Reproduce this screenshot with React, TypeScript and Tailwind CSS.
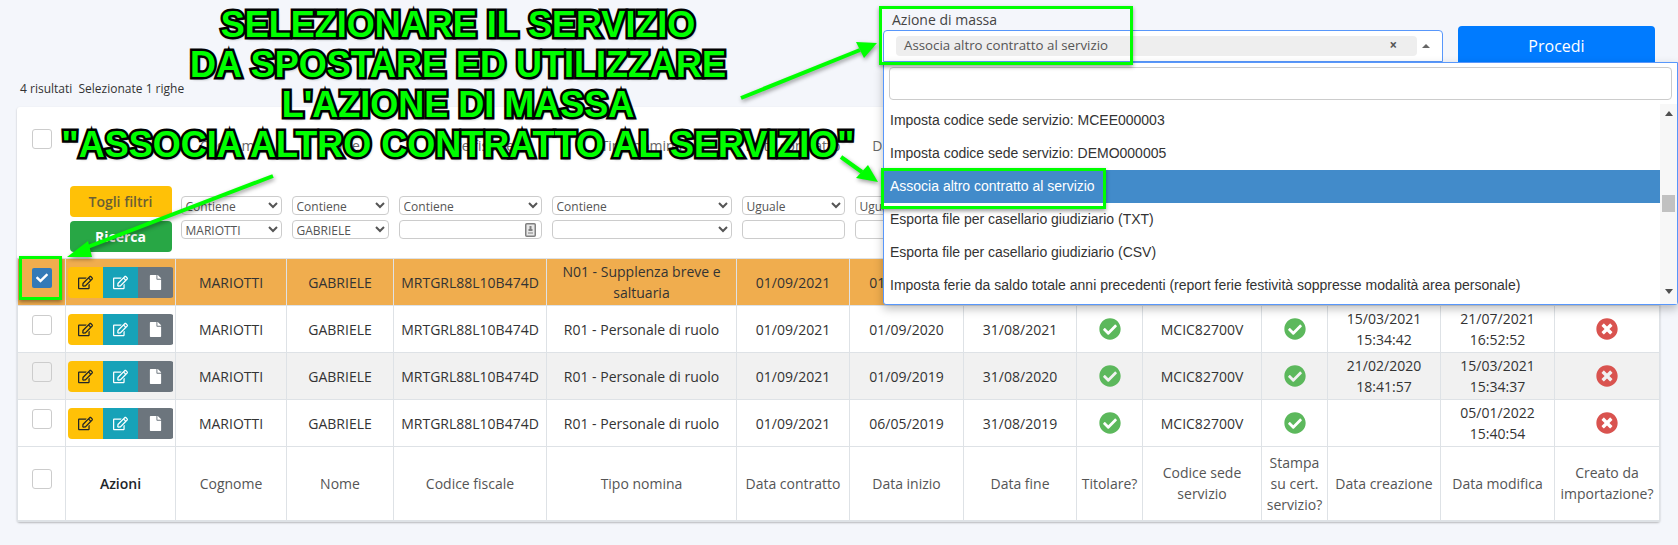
import React from "react";
import { FaCheck, FaCheckCircle, FaFile, FaRegEdit, FaTimesCircle } from "react-icons/fa";

const colWidths = [
  "w-[48px]", "w-[110px]", "w-[111px]", "w-[107px]", "w-[153px]", "w-[190px]", "w-[113px]", "w-[114px]",
  "w-[113px]", "w-[66px]", "w-[119px]", "w-[66px]", "w-[113px]", "w-[114px]", "w-[105px]",
];

const rows = [
  { tipo: "R01 - Personale di ruolo", inizio: "01/09/2020", fine: "31/08/2021", creazione: ["15/03/2021", "15:34:42"], modifica: ["21/07/2021", "16:52:52"], bg: "" },
  { tipo: "R01 - Personale di ruolo", inizio: "01/09/2019", fine: "31/08/2020", creazione: ["21/02/2020", "18:41:57"], modifica: ["15/03/2021", "15:34:37"], bg: "bg-[#f1f1f1]" },
  { tipo: "R01 - Personale di ruolo", inizio: "06/05/2019", fine: "31/08/2019", creazione: [], modifica: ["05/01/2022", "15:40:54"], bg: "" },
];

const options = [
  "Imposta codice sede servizio: MCEE000003",
  "Imposta codice sede servizio: DEMO000005",
  "Associa altro contratto al servizio",
  "Esporta file per casellario giudiziario (TXT)",
  "Esporta file per casellario giudiziario (CSV)",
  "Imposta ferie da saldo totale anni precedenti (report ferie festività soppresse modalità area personale)",
];

const footer = [
  "Cognome", "Nome", "Codice fiscale", "Tipo nomina", "Data contratto", "Data inizio", "Data fine", "Titolare?",
  "Codice sede servizio", "Stampa su cert. servizio?", "Data creazione", "Data modifica", "Creato da importazione?",
];

const td = "border border-[#dee2e6] px-1 text-center align-middle";
const field = "h-[19px] w-full rounded-[4px] border border-[#ccc] bg-white text-[12px] leading-none text-[#555]";

const Box = () => <div className="mx-auto h-[20px] w-[20px] rounded-[3px] border border-[#ccc]" />;

const Actions = () => (
  <div className="mx-auto flex h-[31px] w-[106px] overflow-hidden rounded-[4px] text-[15px]">
    <div className="flex flex-1 items-center justify-center bg-[#ffc107] text-[#212529]"><FaRegEdit /></div>
    <div className="flex flex-1 items-center justify-center bg-[#17a2b8] text-white"><FaRegEdit /></div>
    <div className="flex flex-1 items-center justify-center bg-[#6c757d] text-white"><FaFile /></div>
  </div>
);

const Filter = ({ label, top, children }: { label: string; top: string; children: React.ReactNode }) => (
  <div className="flex h-[151px] flex-col justify-end px-[5px] pb-[19px] text-center">
    <div className="mb-[40px] text-[14px] leading-[21px] font-medium whitespace-nowrap text-[#666]">{label}</div>
    <select defaultValue={top} className={field + " mb-[5px]"}>
      <option>{top}</option>
    </select>
    {children}
  </div>
);

const Value = ({ v }: { v: string }) => (
  <select defaultValue={v} className={field}>
    <option>{v}</option>
  </select>
);

const Arrow = ({ line, head }: { line: string; head: string }) => (
  <g>
    <polyline points={line} fill="none" stroke="#00ff00" strokeWidth="4" />
    <polygon points={head} fill="#00ff00" />
  </g>
);

const annotation =
  "text-[36px] leading-[40px] font-bold text-[#00ff00] [-webkit-text-stroke:5px_#000] [paint-order:stroke_fill] [text-shadow:1px_2px_3px_rgba(0,0,0,0.5)]";

export default function App() {
  return (
    <div className="relative h-[545px] w-[1678px] overflow-hidden bg-[#f4f6fb] font-['Open_Sans',sans-serif] text-[14px] text-[#333]">
      {/* barra superiore */}
      <div className="flex h-[107px] justify-between pr-[23px]">
        <div className="mt-[80px] pl-[20px] text-[12px] leading-[18px]">4 risultati&nbsp; Selezionate 1 righe</div>
        <div className="flex gap-[15px]">
          <div className="mt-[10px] w-[560px]">
            <div className="pl-[9px] text-[14px] leading-[20px] text-[#444]">Azione di massa</div>
            <div className="flex h-[32px] items-center rounded-t-[4px] border border-[#5897fb] bg-white pr-[12px] pl-[12px]">
              <div className="flex h-[20px] flex-1 items-center justify-between rounded-[4px] bg-[#eeeeee] pr-[20px] pl-[8px] text-[13.3px] text-[#555]">
                <span>Associa altro contratto al servizio</span>
                <span className="font-bold">×</span>
              </div>
              <div className="ml-[5px] h-0 w-0 border-x-[4px] border-b-[4px] border-x-transparent border-b-[#666]" />
            </div>
          </div>
          <button className="mt-[26px] h-[40px] w-[197px] rounded-[4px] bg-[#007bff] text-[16px] text-white">Procedi</button>
        </div>
      </div>

      {/* tabella */}
      <div className="ml-[17px] w-[1643px] rounded-[3px] bg-white shadow-[0_1px_2px_rgba(0,0,0,0.25)]">
        <table className="w-full table-fixed border-collapse text-[14px] leading-[21px] text-[#333]">
          <colgroup>
            {colWidths.map((w, i) => (
              <col key={i} className={w} />
            ))}
          </colgroup>
          <thead>
            <tr className="border-b border-[#dee2e6] font-normal">
              <th className="pt-[22px] align-top"><Box /></th>
              <th className="pb-[6px] align-bottom">
                <div className="mx-auto flex w-[102px] flex-col gap-[4px] text-[14px]">
                  <div className="flex h-[31px] items-center justify-center rounded-[4px] bg-[#ffc107] font-semibold text-[#6b5f35]">Togli filtri</div>
                  <div className="flex h-[31px] items-center justify-center rounded-[4px] bg-[#28a745] font-bold text-white">Ricerca</div>
                </div>
              </th>
              <th className="font-normal"><Filter label="Cognome" top="Contiene"><Value v="MARIOTTI" /></Filter></th>
              <th className="font-normal"><Filter label="Nome" top="Contiene"><Value v="GABRIELE" /></Filter></th>
              <th className="font-normal">
                <Filter label="Codice fiscale" top="Contiene">
                  <div className={field + " flex items-center justify-end pr-[5px]"}>
                    <svg width="11" height="14" viewBox="0 0 11 14">
                      <rect x="0.75" y="0.75" width="9.5" height="12.5" rx="1" fill="#e8e8e8" stroke="#808080" strokeWidth="1.5" />
                      <rect x="4.5" y="3" width="2" height="3" fill="#808080" />
                      <rect x="3.5" y="6" width="4" height="2" fill="#808080" />
                      <rect x="3" y="9" width="5" height="2" fill="#b5b5b5" />
                    </svg>
                  </div>
                </Filter>
              </th>
              <th className="font-normal"><Filter label="Tipo nomina" top="Contiene"><Value v="" /></Filter></th>
              <th className="font-normal"><Filter label="Data contratto" top="Uguale"><input className={field} /></Filter></th>
              <th className="font-normal"><Filter label="Data inizio" top="Uguale"><input className={field} /></Filter></th>
              <th colSpan={7} />
            </tr>
          </thead>
          <tbody>
            <tr className="h-[47px] bg-[#f0ad4e]">
              <td className="border border-[#dee2e6] pt-[9px] align-top">
                <div className="mx-auto flex h-[20px] w-[20px] items-center justify-center rounded-[2px] bg-[#337ab7] text-[12px] text-white"><FaCheck /></div>
              </td>
              <td className="border border-[#dee2e6]"><Actions /></td>
              <td className={td}>MARIOTTI</td>
              <td className={td}>GABRIELE</td>
              <td className={td}>MRTGRL88L10B474D</td>
              <td className={td}>N01 - Supplenza breve e saltuaria</td>
              <td className={td}>01/09/2021</td>
              <td className={td}>01/09/2021</td>
              <td colSpan={7} className={td} />
            </tr>
            {rows.map((r, i) => (
              <tr key={i} className={"h-[47px] " + r.bg}>
                <td className="border border-[#dee2e6] pt-[9px] align-top"><Box /></td>
                <td className="border border-[#dee2e6]"><Actions /></td>
                <td className={td}>MARIOTTI</td>
                <td className={td}>GABRIELE</td>
                <td className={td}>MRTGRL88L10B474D</td>
                <td className={td}>{r.tipo}</td>
                <td className={td}>01/09/2021</td>
                <td className={td}>{r.inizio}</td>
                <td className={td}>{r.fine}</td>
                <td className={td}><FaCheckCircle className="mx-auto text-[22px] text-[#5cb85c]" /></td>
                <td className={td}>MCIC82700V</td>
                <td className={td}><FaCheckCircle className="mx-auto text-[22px] text-[#5cb85c]" /></td>
                <td className={td}>{r.creazione[0]}<br />{r.creazione[1]}</td>
                <td className={td}>{r.modifica[0]}<br />{r.modifica[1]}</td>
                <td className={td}><FaTimesCircle className="mx-auto text-[22px] text-[#d9534f]" /></td>
              </tr>
            ))}
            <tr className="h-[74px] border-b-2 border-[#dee2e6]">
              <td className="border border-[#dee2e6] pb-[8px]"><Box /></td>
              <td className="border border-[#dee2e6] text-center font-semibold text-[#212529]">Azioni</td>
              {footer.map((f) => (
                <td key={f} className={td + " font-medium text-[#555]"}>{f}</td>
              ))}
            </tr>
          </tbody>
        </table>
      </div>

      {/* tendina aperta */}
      <div className="absolute top-[62px] left-[883px] flex h-[243px] w-[795px] flex-col rounded-b-[3px] border border-[#5897fb] bg-white font-['Liberation_Sans',sans-serif] shadow-[0_4px_10px_rgba(0,0,0,0.25)]">
        <div className="px-[5px] pt-[4px] pb-[4px]">
          <div className="h-[33px] rounded-[4px] border border-[#ccc]" />
        </div>
        <div className="flex flex-1">
          <ul className="flex-1 text-[14px] text-[#333]">
            {options.map((o, i) => (
              <li key={o} className={"flex h-[33px] items-center px-[6px] " + (i === 2 ? "bg-[#428bca] text-white" : "")}>{o}</li>
            ))}
          </ul>
          <div className="flex w-[17px] flex-col items-center bg-[#f7f7f7] pt-[7px]">
            <div className="h-0 w-0 border-x-[4px] border-b-[5px] border-x-transparent border-b-[#505050]" />
            <div className="mt-[79px] h-[17px] w-[13px] bg-[#c1c1c1]" />
            <div className="mt-[77px] h-0 w-0 border-x-[4px] border-t-[5px] border-x-transparent border-t-[#505050]" />
          </div>
        </div>
      </div>

      {/* annotazioni */}
      <div className="absolute top-[5px] left-[37px] w-[842px] text-center font-['Liberation_Sans',sans-serif]">
        <div className={annotation}>SELEZIONARE IL SERVIZIO</div>
        <div className={annotation}>DA SPOSTARE ED UTILIZZARE</div>
        <div className={annotation}>L'AZIONE DI MASSA</div>
        <div className={annotation}>"ASSOCIA ALTRO CONTRATTO AL SERVIZIO"</div>
      </div>
      <div className="absolute top-[6px] left-[879px] h-[59px] w-[254px] border-[3px] border-[#00ff00] shadow-[0_2px_4px_rgba(0,0,0,0.4)]" />
      <div className="absolute top-[168px] left-[881px] h-[41px] w-[225px] border-[3px] border-[#00ff00] shadow-[0_2px_4px_rgba(0,0,0,0.4)]" />
      <div className="absolute top-[256px] left-[19px] h-[44px] w-[43px] border-[3px] border-[#00ff00] shadow-[0_2px_4px_rgba(0,0,0,0.4)]" />
      <svg className="pointer-events-none absolute top-0 left-0 drop-shadow-[1px_2px_2px_rgba(0,0,0,0.4)]" width="1678" height="545">
        <Arrow line="741,98 860,50" head="877,43 856,42 864,58" />
        <Arrow line="841,157 862,172" head="878,182 856,178 868,165" />
        <Arrow line="273,176 85,248" head="67,257 88,241 92,257" />
      </svg>
    </div>
  );
}
